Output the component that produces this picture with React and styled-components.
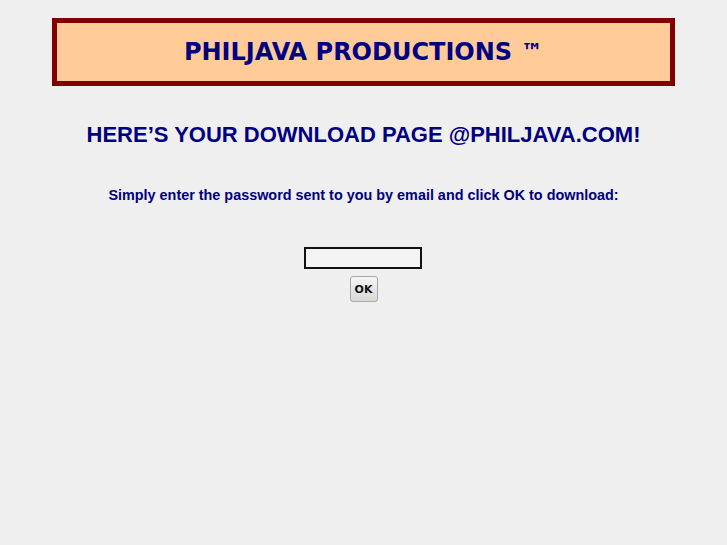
import React from 'react';
import styled, { createGlobalStyle } from 'styled-components';

const GlobalStyle = createGlobalStyle`
  html, body {
    margin: 0;
    padding: 0;
    background: #efefef;
  }
  body {
    font-family: "Liberation Sans", Arial, sans-serif;
  }
`;

const Page = styled.div`
  padding: 18px 52px 0;
  display: flex;
  flex-direction: column;
  align-items: center;
`;

const Banner = styled.header`
  box-sizing: border-box;
  width: 100%;
  height: 68px;
  background: #ffcc99;
  border: 5px solid #800000;
  display: flex;
  align-items: center;
  justify-content: center;
`;

const Title = styled.h1`
  margin: 0;
  font-family: "DejaVu Sans", sans-serif;
  font-weight: bold;
  font-size: 24px;
  color: #000080;
`;

const Tm = styled.span`
  font-size: 22px;
  margin-left: 9px;
  vertical-align: 1px;
`;

const Heading = styled.h2`
  margin: 36px 0 0;
  font-size: 22px;
  font-weight: bold;
  color: #000080;
`;

const Lead = styled.p`
  margin: 39px 0 0;
  font-size: 14.4px;
  font-weight: bold;
  color: #000080;
`;

const Form = styled.form`
  margin-top: 44px;
  display: flex;
  flex-direction: column;
  align-items: center;
  gap: 7px;
`;

const Password = styled.input`
  box-sizing: border-box;
  width: 118px;
  height: 22px;
  margin-right: 2px;
  border: 2px solid #111;
  background: #f4f4f4;
  padding: 0 3px;
  outline: none;
`;

const OkButton = styled.button`
  box-sizing: border-box;
  width: 28px;
  height: 26px;
  padding: 0;
  font-family: "DejaVu Sans", sans-serif;
  font-weight: bold;
  font-size: 11px;
  color: #111;
  border: 1px solid #a8a8a8;
  border-radius: 3px;
  background: linear-gradient(#f4f4f4, #d8d8d8);
`;

export default function App() {
  return (
    <>
      <GlobalStyle />
      <Page>
        <Banner>
          <Title>
            PHILJAVA PRODUCTIONS<Tm>™</Tm>
          </Title>
        </Banner>
        <Heading>HERE’S YOUR DOWNLOAD PAGE @PHILJAVA.COM!</Heading>
        <Lead>Simply enter the password sent to you by email and click OK to download:</Lead>
        <Form onSubmit={(e) => e.preventDefault()}>
          <Password type="password" />
          <OkButton type="submit">OK</OkButton>
        </Form>
      </Page>
    </>
  );
}
